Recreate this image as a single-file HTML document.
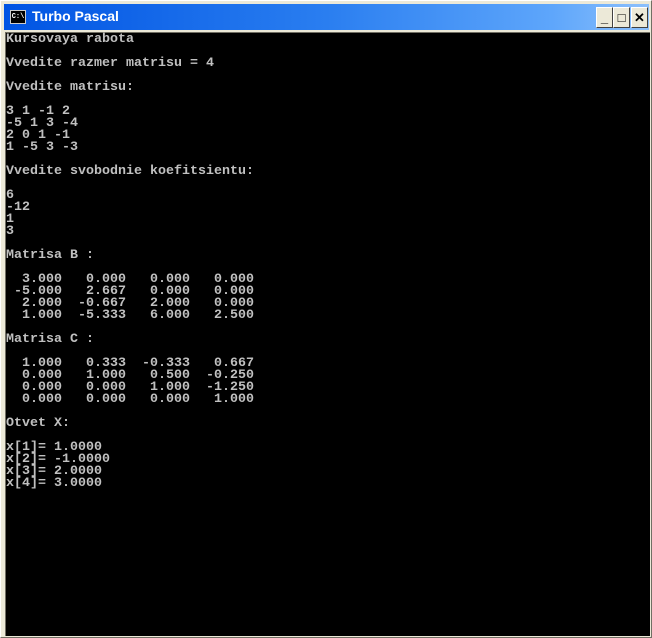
<!DOCTYPE html>
<html><head><meta charset="utf-8"><style>
html,body{margin:0;padding:0;width:652px;height:638px;overflow:hidden;background:#ece9d8}
.win{position:absolute;left:0;top:0;width:650px;height:636px;border:1px solid #fff;border-right-color:#716f64;border-bottom-color:#716f64;background:#ece9d8}
.title{position:absolute;left:3px;top:3px;width:645px;height:26px;background:linear-gradient(90deg,#0054e3 0%,#2a7ef0 50%,#5ea6fb 85%,#8cc0fc 100%)}
.title .t{position:absolute;left:28px;top:4px;color:#fff;font:bold 14px "Liberation Sans",sans-serif}
.icon{position:absolute;left:6px;top:6px;width:14px;height:12px;background:#000;border:1px solid #ccc;color:#fff;font:bold 7px "Liberation Mono",monospace;line-height:12px;text-align:center}
.btn{position:absolute;top:3px;width:15px;height:19px;background:#ece9d8;border:1px solid #fff;border-right-color:#404040;border-bottom-color:#404040;font:bold 13px "Liberation Sans",sans-serif;text-align:center;line-height:19px}
.client{position:absolute;left:4px;top:31px;width:644px;height:603px;background:#000;border-top:1px solid #716f64;border-left:1px solid #716f64}
pre{margin:0;position:absolute;left:0;top:1px;color:#c0c0c0;font:bold 13.33px/12px "Liberation Mono",monospace;letter-spacing:0}
</style></head><body>
<div class="win">
<div class="title"><div class="icon">C:\</div><div class="t">Turbo Pascal</div>
<div class="btn" style="left:592px">_</div>
<div class="btn" style="left:609px">□</div>
<div class="btn" style="left:627px">✕</div>
</div>
<div class="client"><pre>Kursovaya rabota

Vvedite razmer matrisu = 4

Vvedite matrisu:

3 1 -1 2
-5 1 3 -4
2 0 1 -1
1 -5 3 -3

Vvedite svobodnie koefitsientu:

6
-12
1
3

Matrisa B :

  3.000   0.000   0.000   0.000
 -5.000   2.667   0.000   0.000
  2.000  -0.667   2.000   0.000
  1.000  -5.333   6.000   2.500

Matrisa C :

  1.000   0.333  -0.333   0.667
  0.000   1.000   0.500  -0.250
  0.000   0.000   1.000  -1.250
  0.000   0.000   0.000   1.000

Otvet X:

x[1]= 1.0000
x[2]= -1.0000
x[3]= 2.0000
x[4]= 3.0000</pre></div>
</div>
</body></html>
